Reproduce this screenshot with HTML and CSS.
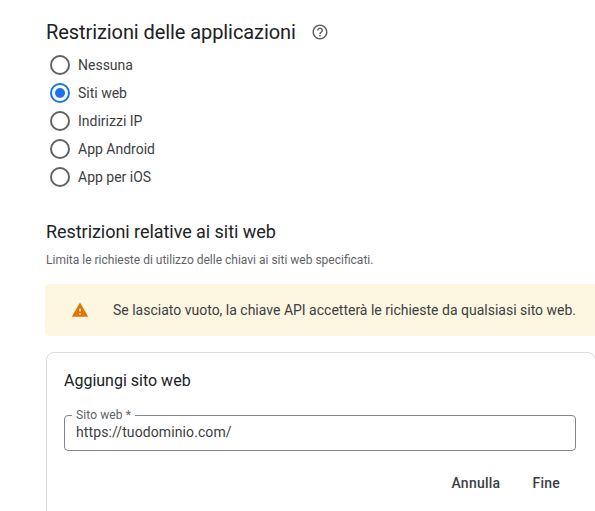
FILE: index.html
```html
<!DOCTYPE html>
<html lang="it">
<head>
<meta charset="utf-8">
<title>Restrizioni delle applicazioni</title>
<link rel="stylesheet" href="styles.css">
</head>
<body>
<main class="page">
  <div class="title-row">
    <h1 class="title">Restrizioni delle applicazioni</h1>
    <svg class="help" viewBox="0 0 24 24" width="18" height="18" aria-hidden="true"><path fill="#5f6368" d="M11 18h2v-2h-2v2zm1-16C6.48 2 2 6.48 2 12s4.48 10 10 10 10-4.48 10-10S17.52 2 12 2zm0 18c-4.41 0-8-3.59-8-8s3.59-8 8-8 8 3.59 8 8-3.59 8-8 8zm0-14c-2.21 0-4 1.79-4 4h2c0-1.1.9-2 2-2s2 .9 2 2c0 2-3 1.75-3 5h2c0-2.25 3-2.5 3-5 0-2.21-1.79-4-4-4z"/></svg>
  </div>
  <div class="radios">
    <div class="radio"><span class="dot"></span><span>Nessuna</span></div>
    <div class="radio on"><span class="dot"></span><span>Siti web</span></div>
    <div class="radio"><span class="dot"></span><span>Indirizzi IP</span></div>
    <div class="radio"><span class="dot"></span><span>App Android</span></div>
    <div class="radio"><span class="dot"></span><span>App per iOS</span></div>
  </div>
  <h2 class="subtitle">Restrizioni relative ai siti web</h2>
  <p class="desc">Limita le richieste di utilizzo delle chiavi ai siti web specificati.</p>
  <div class="banner">
    <svg class="warn" viewBox="0 0 24 24" width="18" height="18" aria-hidden="true"><path fill="#e37400" d="M1 21h22L12 2 1 21zm12-3h-2v-2h2v2zm0-4h-2v-4h2v4z"/></svg>
    <span>Se lasciato vuoto, la chiave API accetterà le richieste da qualsiasi sito web.</span>
  </div>
  <section class="card">
    <h3 class="card-title">Aggiungi sito web</h3>
    <div class="field">
      <span class="legend">Sito web *</span>
      <span class="value">https://tuodominio.com/</span>
    </div>
    <div class="actions">
      <span class="btn">Annulla</span>
      <span class="btn">Fine</span>
    </div>
  </section>
</main>
</body>
</html>
```
FILE: styles.css
```css
* { box-sizing: border-box; }
html, body { margin: 0; height: 100%; overflow: hidden; background: #fff; }
body { font-family: Roboto, "Liberation Sans", sans-serif; color: #202124; }
.page { height: 511px; overflow: hidden; padding: 18px 0 0 46px; }
.title-row { display: flex; align-items: center; gap: 15px; height: 28px; }
.title { margin: 0; font-size: 20px; font-weight: 400; line-height: 28px; letter-spacing: -.08px; }
.help { flex: none; }
.radios { margin: 5px 0 0 4px; }
.radio { display: flex; align-items: center; gap: 8px; height: 28px; font-size: 14px; color: #3c4043; }
.dot { width: 20px; height: 20px; border: 2px solid #5f6368; border-radius: 50%; flex: none; display: flex; align-items: center; justify-content: center; }
.on .dot { border-color: #1a73e8; }
.on .dot::after { content: ""; width: 10px; height: 10px; border-radius: 50%; background: #1a73e8; }
.subtitle { margin: 29px 0 0; font-size: 18px; font-weight: 400; line-height: 24px; letter-spacing: -.05px; color: #202124; }
.desc { margin: 8px 0 0; font-size: 12px; line-height: 16px; color: #5f6368; }
.banner { display: flex; align-items: center; gap: 24px; margin: 16px 0 0 -1px; width: 560px; height: 52px; padding-left: 26px; background: #fdf6e0; border-radius: 4px; font-size: 14px; color: #3c4043; }
.warn { flex: none; }
.card { margin-top: 16px; width: 550px; height: 200px; padding: 18px 19px 0 17px; border: 1px solid #dadce0; border-radius: 8px; }
.card-title { margin: 0; font-size: 16px; font-weight: 400; line-height: 20px; color: #202124; }
.field { position: relative; margin-top: 24px; width: 512px; height: 36px; padding: 0 11px 2px; display: flex; align-items: center; border: 1px solid #80868b; border-radius: 4px; font-size: 14px; color: #3c4043; letter-spacing: .1px; }
.legend { position: absolute; left: 7px; top: -8px; padding: 0 4px; background: #fff; font-size: 12px; line-height: 14px; color: #5f6368; }
.actions { display: flex; justify-content: flex-end; gap: 32px; margin-top: 22px; padding-right: 16px; width: 512px; font-size: 14px; line-height: 20px; font-weight: 500; letter-spacing: .25px; color: #3c4043; }
```
